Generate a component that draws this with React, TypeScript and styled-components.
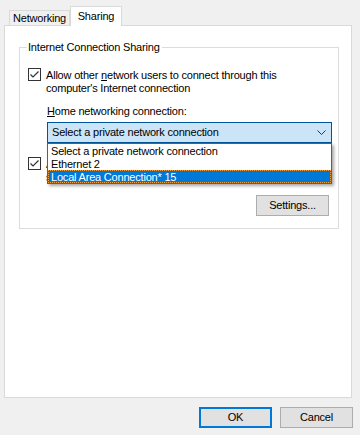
import React from "react";
import styled, { createGlobalStyle } from "styled-components";

const Global = createGlobalStyle`
  html, body { margin: 0; padding: 0; background: #f0f0f0; }
  body {
    font-family: "Liberation Sans", Arial, sans-serif;
    font-size: 11px;
    letter-spacing: -0.2px;
    color: #000;
  }
  * { box-sizing: border-box; }
`;

const Dialog = styled.div`
  width: 360px;
  height: 435px;
  padding: 6px 0 0 4px;
  display: flex;
  flex-direction: column;
  background: #f0f0f0;
  overflow: hidden;
`;

const TabStrip = styled.div`
  height: 19px;
  display: flex;
  align-items: flex-end;
  padding-left: 5px;
`;

const Tab = styled.div<{ $active?: boolean }>`
  position: relative;
  z-index: ${(p) => (p.$active ? 1 : 0)};
  height: ${(p) => (p.$active ? "20px" : "15px")};
  width: ${(p) => (p.$active ? "52px" : "61px")};
  margin-bottom: ${(p) => (p.$active ? "-1px" : "0")};
  background: ${(p) => (p.$active ? "#ffffff" : "#f0f0f0")};
  border: 1px solid #d9d9d9;
  border-bottom: none;
  display: flex;
  justify-content: center;
  align-items: flex-start;
  padding-top: ${(p) => (p.$active ? "3px" : "1px")};
  line-height: 13px;
  white-space: nowrap;
`;

const Panel = styled.div`
  width: 348px;
  height: 373px;
  background: #ffffff;
  border: 1px solid #d9d9d9;
  padding: 21px 0 0 14px;
`;

const GroupBox = styled.div`
  position: relative;
  width: 320px;
  border: 1px solid #dcdcdc;
  padding: 20px 0 12px 8px;
  display: flex;
  flex-direction: column;
`;

const Legend = styled.span`
  position: absolute;
  top: -7px;
  left: 7px;
  padding: 0 2px 0 1px;
  background: #ffffff;
  line-height: 13px;
`;

const CheckRow = styled.div<{ $gapTop?: number }>`
  display: flex;
  align-items: flex-start;
  gap: 5px;
  margin-top: ${(p) => p.$gapTop ?? 0}px;
`;

const Box = styled.span`
  flex: none;
  width: 13px;
  height: 13px;
  border: 1px solid #333333;
  background: #ffffff;
  display: flex;
  align-items: center;
  justify-content: center;
`;

const CheckText = styled.div`
  margin-top: 1px;
  line-height: 13px;
  width: 270px;
`;

const U = styled.span`
  text-decoration: underline;
  text-underline-offset: 1px;
`;

const Indent = styled.div`
  margin-left: 19px;
  display: flex;
  flex-direction: column;
`;

const FieldLabel = styled.div`
  margin-top: 10px;
  line-height: 13px;
`;

const ComboWrap = styled.div`
  position: relative;
  margin-top: 4px;
  width: 285px;
`;

const Combo = styled.div`
  height: 21px;
  border: 1px solid #005499;
  background: #cce4f7;
  display: flex;
  align-items: center;
  justify-content: space-between;
  padding: 0 5px 0 4px;
  line-height: 13px;
`;

const DropList = styled.div`
  position: absolute;
  z-index: 5;
  top: 100%;
  left: 0;
  width: 285px;
  background: #ffffff;
  border: 1px solid #0078d7;
  box-shadow: 2px 2px 3px rgba(0, 0, 0, 0.35);
  display: flex;
  flex-direction: column;
`;

const Item = styled.div<{ $selected?: boolean }>`
  height: 13px;
  line-height: 12px;
  padding-left: 2px;
  color: ${(p) => (p.$selected ? "#ffffff" : "#000000")};
  background: ${(p) => (p.$selected ? "#0078d7" : "transparent")};
  border: 1px dotted ${(p) => (p.$selected ? "#f0a040" : "transparent")};
  white-space: nowrap;
`;

const ButtonRow = styled.div<{ $top: number; $right: number }>`
  display: flex;
  justify-content: flex-end;
  gap: 8px;
  margin-top: ${(p) => p.$top}px;
  padding-right: ${(p) => p.$right}px;
`;

const Button = styled.button<{ $default?: boolean }>`
  width: 73px;
  height: 21px;
  margin: 0;
  padding: 0;
  font-family: "Liberation Sans", Arial, sans-serif;
  font-size: 11px;
  letter-spacing: -0.2px;
  color: #000;
  background: #e1e1e1;
  border: ${(p) => (p.$default ? "2px solid #0078d7" : "1px solid #adadad")};
  line-height: 13px;
`;

const Check = () => (
  <svg width="11" height="11" viewBox="0 0 11 11">
    <polyline
      points="1.5,5.5 4,8 9.5,2.5"
      fill="none"
      stroke="#333333"
      strokeWidth="1.2"
    />
  </svg>
);

const Chevron = () => (
  <svg width="9" height="5" viewBox="0 0 9 5">
    <polyline points="0.5,0.5 4.5,4.5 8.5,0.5" fill="none" stroke="#333" strokeWidth="1" />
  </svg>
);

export default function App() {
  return (
    <>
      <Global />
      <Dialog>
        <TabStrip>
          <Tab>Networking</Tab>
          <Tab $active>Sharing</Tab>
        </TabStrip>
        <Panel>
          <GroupBox>
            <Legend>Internet Connection Sharing</Legend>
            <CheckRow>
              <Box>
                <Check />
              </Box>
              <CheckText>
                Allow other <U>n</U>etwork users to connect through this
                <br />
                computer's Internet connection
              </CheckText>
            </CheckRow>
            <Indent>
              <FieldLabel>
                <U>H</U>ome networking connection:
              </FieldLabel>
              <ComboWrap>
                <Combo>
                  <span>Select a private network connection</span>
                  <Chevron />
                </Combo>
                <DropList>
                  <Item>Select a private network connection</Item>
                  <Item>Ethernet 2</Item>
                  <Item $selected>Local Area Connection* 15</Item>
                </DropList>
              </ComboWrap>
            </Indent>
            <CheckRow $gapTop={14}>
              <Box>
                <Check />
              </Box>
              <CheckText>
                Allow other network users to control or disable the
                <br />
                shared Internet connection
              </CheckText>
            </CheckRow>
            <ButtonRow $top={11} $right={9}>
              <Button>
                Settin<U>g</U>s...
              </Button>
            </ButtonRow>
          </GroupBox>
        </Panel>
        <ButtonRow $top={9} $right={7}>
          <Button $default>OK</Button>
          <Button>Cancel</Button>
        </ButtonRow>
      </Dialog>
    </>
  );
}
